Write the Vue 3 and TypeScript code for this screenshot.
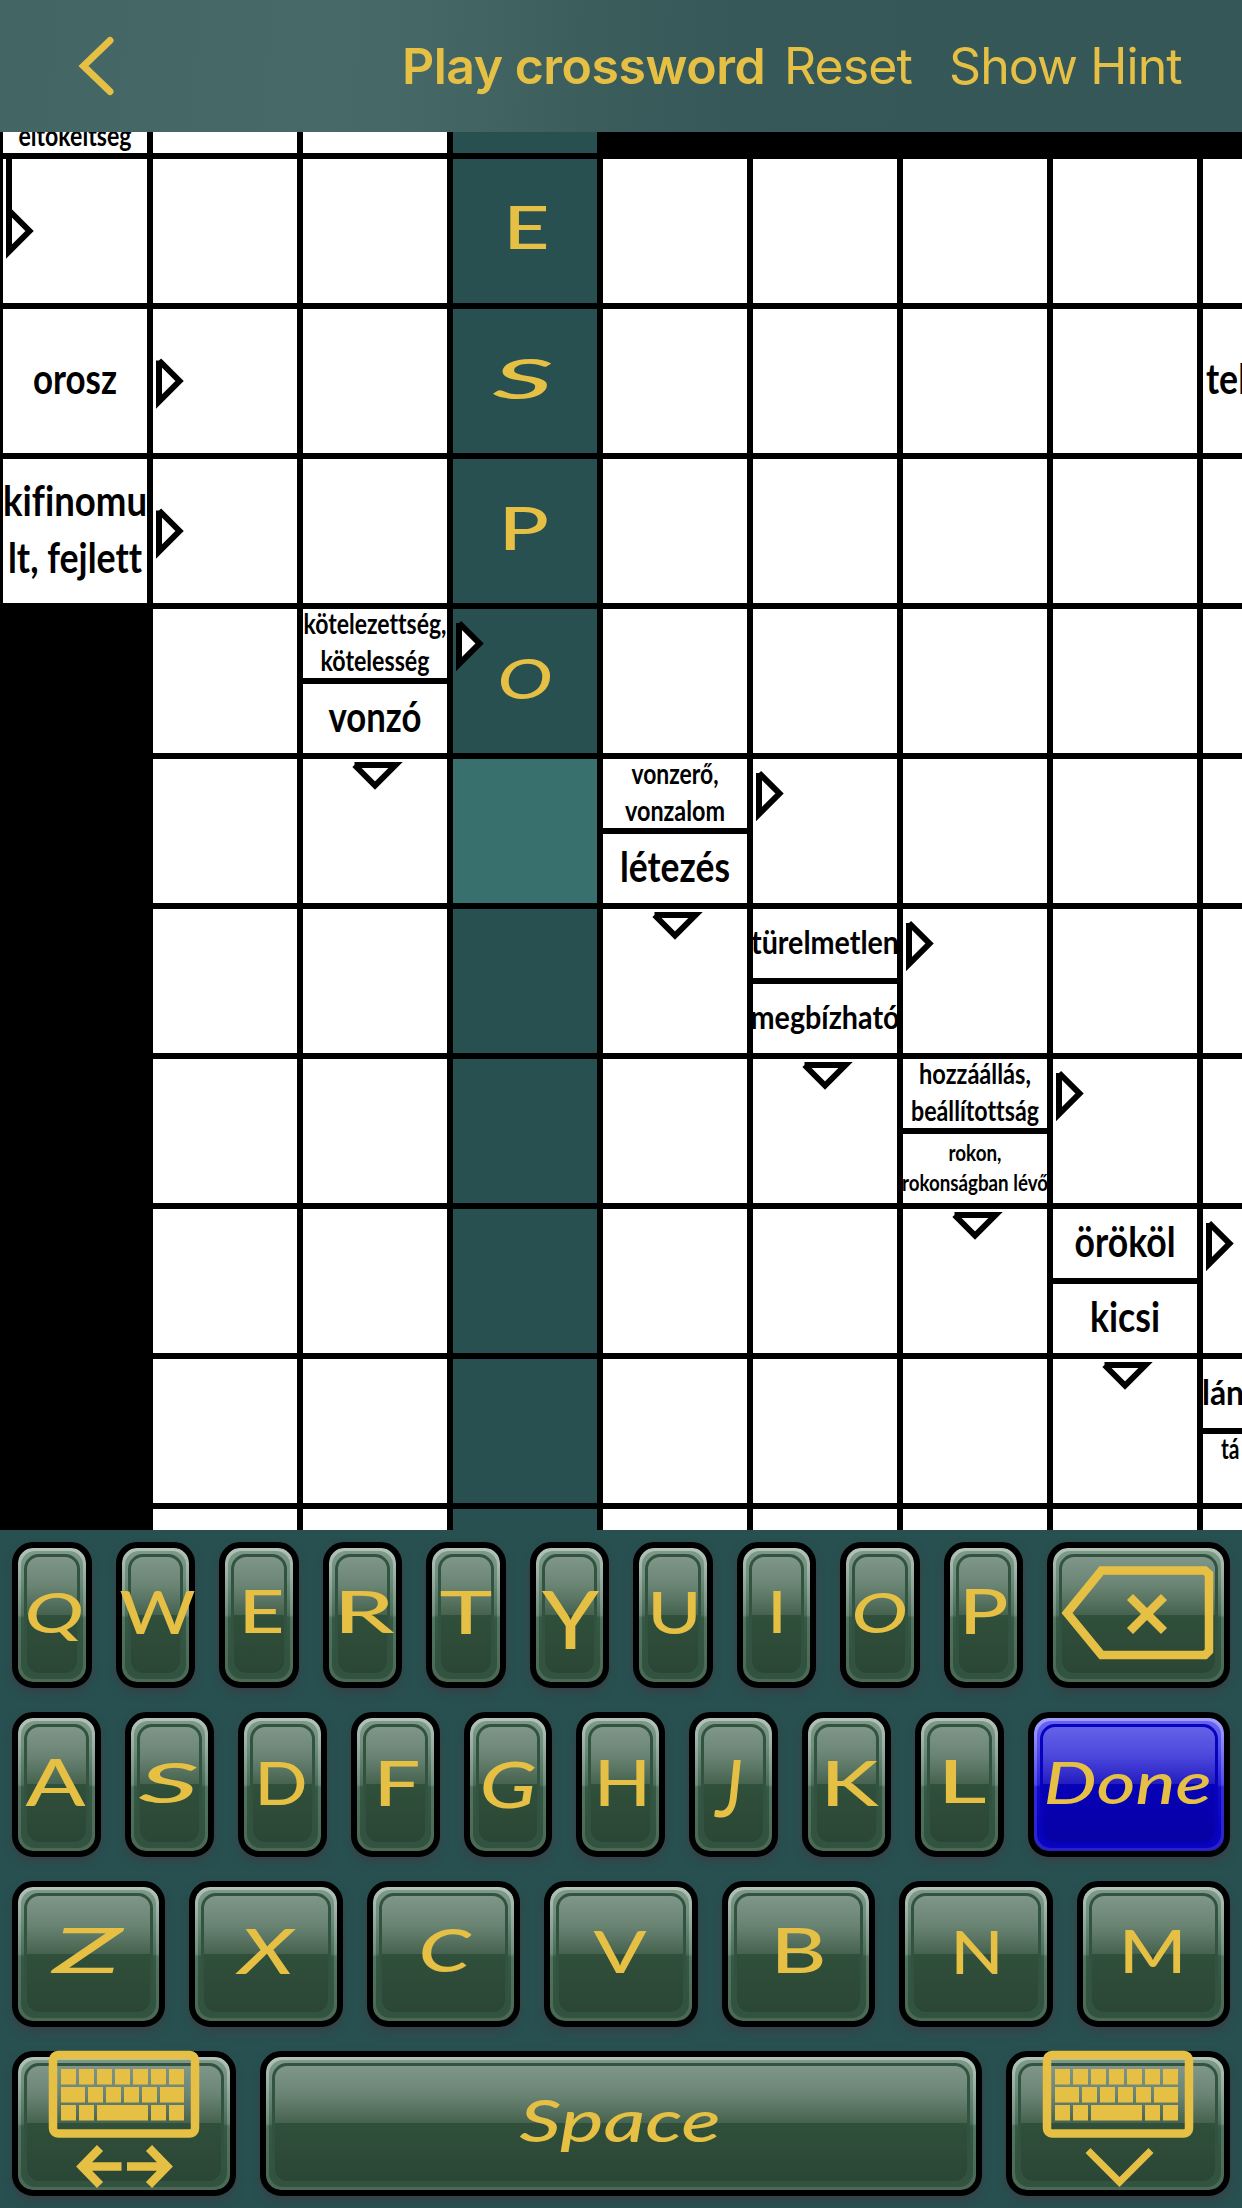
<script setup lang="ts">
interface Line {
  text: string
  y: number
  width?: number
  size: number
  x?: number
}
interface Cell {
  kind: 'open' | 'block' | 'word' | 'active'
  lines?: Line[]
  split?: boolean
  arrow?: string
  letter?: Glyph
}
interface Glyph {
  text: string
  left: number
  right: number
  top: number
  bottom: number
}
interface Key extends Partial<Glyph> {
  id: string
  text?: string
  grow: number
  width?: number
  tone?: 'done'
  icon?: 'erase' | 'layout' | 'hide'
}

const ROWS = 11
const COLS = 9

const RIGHT_FULL = 'M9 54.5L29.5 75L9 95.5V54.5'
const RIGHT_HALF = 'M9 17L29.5 37.5L9 58V17'
const DOWN = 'M54.5 9H95.5L75 29.5L54.5 9'
const BENT = 'M9 0V95.5L29.5 75L9 54.5'

const glyph = (text: string, left: number, right: number, top: number, bottom: number): Glyph => ({
  text, left, right, top, bottom,
})

const special: Record<string, Partial<Cell>> = {
  '0-0': { lines: [{ text: 'eltökéltség', y: 140.3, width: 113, size: 28 }] },
  '1-0': { arrow: BENT },
  '2-0': { lines: [{ text: 'orosz', y: 87.7, width: 84, size: 42 }] },
  '2-1': { arrow: RIGHT_FULL },
  '2-8': { lines: [{ text: 'tel', y: 87.5, x: 6, width: 41, size: 42 }] },
  '3-0': {
    lines: [
      { text: 'kifinomu', y: 59.5, width: 144, size: 42 },
      { text: 'lt, fejlett', y: 117, width: 134, size: 42 },
    ],
  },
  '3-1': { arrow: RIGHT_FULL },
  '4-2': {
    split: true,
    lines: [
      { text: 'kötelezettség,', y: 28, width: 143, size: 28 },
      { text: 'kötelesség', y: 65, width: 109, size: 28 },
      { text: 'vonzó', y: 126.3, width: 93, size: 42 },
    ],
  },
  '4-3': { arrow: RIGHT_HALF },
  '5-2': { arrow: DOWN },
  '5-4': {
    split: true,
    lines: [
      { text: 'vonzerő,', y: 28, width: 87, size: 28 },
      { text: 'vonzalom', y: 65, width: 100, size: 28 },
      { text: 'létezés', y: 126, width: 110, size: 42 },
    ],
  },
  '5-5': { arrow: RIGHT_HALF },
  '6-4': { arrow: DOWN },
  '6-5': {
    split: true,
    lines: [
      { text: 'türelmetlen', y: 47.7, width: 148, size: 33 },
      { text: 'megbízható', y: 122.5, width: 149, size: 33 },
    ],
  },
  '6-6': { arrow: RIGHT_HALF },
  '7-5': { arrow: DOWN },
  '7-6': {
    split: true,
    lines: [
      { text: 'hozzáállás,', y: 28, width: 112, size: 28 },
      { text: 'beállítottság', y: 65, width: 128, size: 28 },
      { text: 'rokon,', y: 105, width: 53, size: 22 },
      { text: 'rokonságban lévő', y: 135, width: 146, size: 22 },
    ],
  },
  '7-7': { arrow: RIGHT_HALF },
  '8-6': { arrow: DOWN },
  '8-7': {
    split: true,
    lines: [
      { text: 'örököl', y: 51, width: 101, size: 42 },
      { text: 'kicsi', y: 126, width: 70, size: 42 },
    ],
  },
  '8-8': { arrow: RIGHT_HALF },
  '9-7': { arrow: DOWN },
  '9-8': {
    split: true,
    lines: [
      { text: 'lán', y: 49, x: 2, width: 42, size: 35 },
      { text: 'tá', y: 103, x: 21, width: 18.5, size: 28 },
    ],
  },
}

const entered: Record<number, Glyph> = {
  1: glyph('E', 55.7, 97, 50, 93),
  2: glyph('S', 45, 100.5, 52, 92.5),
  3: glyph('P', 51, 96.5, 50.5, 94),
  4: glyph('O', 50, 100, 52.5, 92.5),
}

function kindOf(row: number, col: number): Cell['kind'] {
  if (col === 3) return row === 5 ? 'active' : 'word'
  if (row === 0 && col > 3) return 'block'
  if (col === 0 && row > 3) return 'block'
  return 'open'
}

const cells: Cell[] = Array.from({ length: ROWS * COLS }, (_, i) => {
  const row = Math.floor(i / COLS)
  const col = i % COLS
  return {
    kind: kindOf(row, col),
    letter: col === 3 ? entered[row] : undefined,
    ...special[`${row}-${col}`],
  }
})

const key = (text: string, left: number, right: number, top: number, bottom: number): Key => ({
  id: text, text, left, right, top, bottom, grow: 1,
})

const keyRows: Key[][] = [
  [
    key('Q', 15, 69, 50, 91),
    key('W', 6, 77, 49, 92),
    key('E', 22, 63, 48, 91),
    key('R', 13, 69, 50, 91),
    key('T', 16, 64, 49, 92),
    key('Y', 14.5, 66.5, 48, 107),
    key('U', 17, 66, 51, 92),
    key('I', 33, 47, 49, 91),
    key('O', 14, 65, 50, 91),
    key('P', 17.5, 62, 48, 92),
    { id: 'erase', grow: 0, width: 183, icon: 'erase' },
  ],
  [
    key('A', 16, 71, 47, 94),
    key('S', 16, 71, 50, 91),
    key('D', 19, 67, 50, 93),
    key('F', 25, 67, 49, 94),
    key('G', 18, 70, 50, 96),
    key('H', 20.5, 72.5, 48, 94),
    key('J', 29, 51, 48, 105),
    key('K', 21, 74, 49, 94),
    key('L', 25, 69, 48, 91),
    { id: 'done', text: 'Done', left: 18, right: 181, top: 50, bottom: 92, grow: 0, width: 202, tone: 'done' },
  ],
  [
    key('Z', 43, 107, 48, 92),
    key('X', 52, 102, 49, 93),
    key('C', 54, 101, 48, 91),
    key('V', 52, 100, 51, 92),
    key('B', 51, 102, 48, 92),
    key('N', 54, 102, 50, 93),
    key('M', 44.5, 107, 49, 92),
  ],
  [
    { id: 'layout', grow: 0, width: 224, icon: 'layout' },
    key('Space', 262, 458, 49, 91),
    { id: 'hide', grow: 0, width: 224, icon: 'hide' },
  ],
]

const CAP = 0.72
const SLANTED = ['Q', 'O', 'S', 'C', 'Z', 'X', 'G', 'J', 'Done', 'Space']
const fontSize = (g: Partial<Glyph>) => (g.bottom! - g.top!) / CAP
const centre = (g: Partial<Glyph>) => (g.left! + g.right!) / 2
const span = (g: Partial<Glyph>) => g.right! - g.left! + 5
const slanted = (g: Partial<Glyph>) => SLANTED.includes(g.text!)

// x, y, width of every small key on the keyboard pictogram
const pips: [number, number, number][] = [
  ...[49, 67, 85, 103, 121, 139, 157].map((x): [number, number, number] => [x, 18, 15]),
  [49, 36, 24], [76, 36, 15], [94, 36, 15], [112, 36, 15], [130, 36, 15], [148, 36, 24],
  [49, 54, 15], [67, 54, 15], [85, 54, 51], [139, 54, 15], [157, 54, 15],
]
</script>

<template>
  <main class="screen">
    <header class="bar">
      <svg class="back" width="40" height="64" viewBox="0 0 40 64">
        <path d="M35 6.5L8.500 32L35 57.5" />
      </svg>
      <h1 class="title">Play crossword</h1>
      <span class="action reset">Reset</span>
      <span class="action hint">Show Hint</span>
    </header>

    <section class="board">
      <div class="grid">
        <div v-for="(cell, i) in cells" :key="i" class="cell" :class="cell.kind">
          <svg v-if="cell.lines || cell.arrow || cell.letter" width="144" height="144" viewBox="3 3 144 144">
            <rect v-if="cell.split" x="0" y="72" width="150" height="6" />
            <text
              v-for="line in cell.lines"
              :key="line.text"
              class="clue"
              :x="line.x ?? 75"
              :y="line.y"
              :font-size="line.size"
              :text-anchor="line.x === undefined ? 'middle' : 'start'"
              :textLength="line.width"
              lengthAdjust="spacingAndGlyphs"
            >{{ line.text }}</text>
            <path v-if="cell.arrow" class="arrow" :d="cell.arrow" />
            <text
              v-if="cell.letter"
              class="hand"
              :class="{ slanted: slanted(cell.letter) }"
              :x="centre(cell.letter)"
              :y="cell.letter.bottom"
              :font-size="fontSize(cell.letter)"
              :textLength="span(cell.letter)"
              lengthAdjust="spacingAndGlyphs"
            >{{ cell.letter.text }}</text>
          </svg>
        </div>
      </div>
    </section>

    <section class="keyboard">
      <div v-for="(row, r) in keyRows" :key="r" class="row">
        <div
          v-for="k in row"
          :key="k.id"
          class="key"
          :class="k.tone"
          :style="{ flexGrow: k.grow, flexBasis: (k.width ?? 0) + 'px' }"
        >
          <svg class="face">
            <text
              v-if="k.text"
              class="hand"
              :class="{ slanted: slanted(k) }"
              :x="centre(k)"
              :y="k.bottom"
              :font-size="fontSize(k)"
              :textLength="span(k)"
              lengthAdjust="spacingAndGlyphs"
            >{{ k.text }}</text>
            <g v-else-if="k.icon === 'erase'" class="line">
              <path d="M20 71L54.5 28.5H158L162 32V109L158 113H54.5Z" />
              <path d="M83 55L117 89M117 55L83 89" />
            </g>
            <g v-else>
              <rect class="line" x="41" y="4" width="142" height="78.5" rx="5" />
              <rect v-for="(p, n) in pips" :key="n" class="pip" :x="p[0]" :y="p[1]" :width="p[2]" height="15.5" />
              <path v-if="k.icon === 'layout'" class="line" d="M109.500 115.5H71M88 97L70 115.5L88 134M115 115.5H154M137 97L155 115.5L137 134" />
              <path v-else class="line thin" d="M82 99.500L113.500 131L145 99.500" />
            </g>
          </svg>
        </div>
      </div>
    </section>
  </main>
</template>

<style>
body {
  margin: 0;
  background: #285050;
}
</style>

<style scoped>
.screen {
  width: 1242px;
  height: 2208px;
  display: flex;
  flex-direction: column;
  overflow: hidden;
  background: #285050;
}

.bar {
  box-sizing: border-box;
  height: 132px;
  flex: none;
  display: flex;
  align-items: center;
  padding-left: 75px;
  background: linear-gradient(93deg, #436564 0%, #476968 26%, #456766 34%, #3a5c5b 49%, #375859 60%, #365758 100%);
  color: #e5c044;
  font-family: Inter, "Liberation Sans", sans-serif;
  font-size: 50px;
  line-height: 132px;
  white-space: nowrap;
}

.back {
  flex: none;
  fill: none;
  stroke: #e5c044;
  stroke-width: 7;
  stroke-linecap: round;
  stroke-linejoin: miter;
}

.title {
  margin: 0 0 0 287px;
  width: 382px;
  font-size: 50px;
  font-weight: 600;
  letter-spacing: -0.5px;
}

.action {
  letter-spacing: -0.9px;
}

.reset {
  width: 165px;
}

.board {
  height: 1398px;
  flex: none;
  overflow: hidden;
  background: #000;
}

.grid {
  display: grid;
  grid-template-columns: repeat(9, 150px);
  grid-auto-rows: 150px;
  width: 1350px;
  margin-top: -126px;
}

.cell {
  box-sizing: border-box;
  border: 3px solid #000;
  background: #fff;
}

.cell svg {
  display: block;
}

.cell.block {
  background: #000;
}

.cell.word {
  background: #285050;
}

.cell.active {
  background: #38706e;
}

.clue {
  font-family: Lato, "Open Sans", sans-serif;
  font-weight: 700;
  font-variant-ligatures: none;
  fill: #000;
}

.arrow {
  fill: #fff;
  stroke: #000;
  stroke-width: 6;
}

.hand {
  font-family: "Bradley Hand", Lato, sans-serif;
  font-weight: 500;
  fill: #e5c044;
  text-anchor: middle;
}

.slanted {
  font-style: italic;
}

.keyboard {
  flex: 1;
  display: flex;
  flex-direction: column;
  gap: 24px;
  padding: 12px;
}

.row {
  flex: 1;
  display: flex;
  gap: 24px;
}

.key {
  --light: linear-gradient(#b3c3ba 0%, #a2b4aa 15%, #6f8c7c 50%, #527460 52%, #4a6854 100%);
  --mid: linear-gradient(#7e9988 0%, #6f8e7d 20%, #4a6c58 50%, #365945 52%, #31533f 85%);
  --ring: #31533f;
  --face: linear-gradient(#7f9688 0%, #6a8474 25%, #46634f 49.700%, #30503b 49.700%, #2b4635 100%);
  position: relative;
  box-sizing: border-box;
  min-width: 0;
  flex-shrink: 0;
  border: 6px solid #000;
  border-radius: 21px;
  background: var(--light) padding-box;
  box-shadow: 0 5px 8px rgba(64, 56, 66, 0.6);
}

.key::before,
.key::after {
  content: "";
  position: absolute;
}

.key::before {
  inset: 3px;
  border-radius: 14px;
  background: var(--mid);
}

.key::after {
  inset: 6px;
  border: 3px solid var(--ring);
  border-radius: 15px;
  background: var(--face) padding-box;
}

.key.done {
  --light: linear-gradient(#a29fff 0%, #8e8afc 15%, #4d48ea 50%, #302ad8 52%, #2a22c8 100%);
  --mid: linear-gradient(#6764f2 0%, #5551ea 20%, #2a24d4 50%, #120cc8 52%, #0a04c0 85%);
  --ring: #0702bc;
  --face: linear-gradient(#6461e8 0%, #4c48dc 25%, #231cc0 49.700%, #0701b8 49.700%, #0602a4 100%);
}

.face {
  position: absolute;
  z-index: 1;
  top: -6px;
  left: -6px;
  width: calc(100% + 12px);
  height: calc(100% + 12px);
  overflow: visible;
}

.line {
  fill: none;
  stroke: #e5c044;
  stroke-width: 8.5;
}

.thin {
  stroke-width: 7;
}

.pip {
  fill: #e5c044;
}
</style>
